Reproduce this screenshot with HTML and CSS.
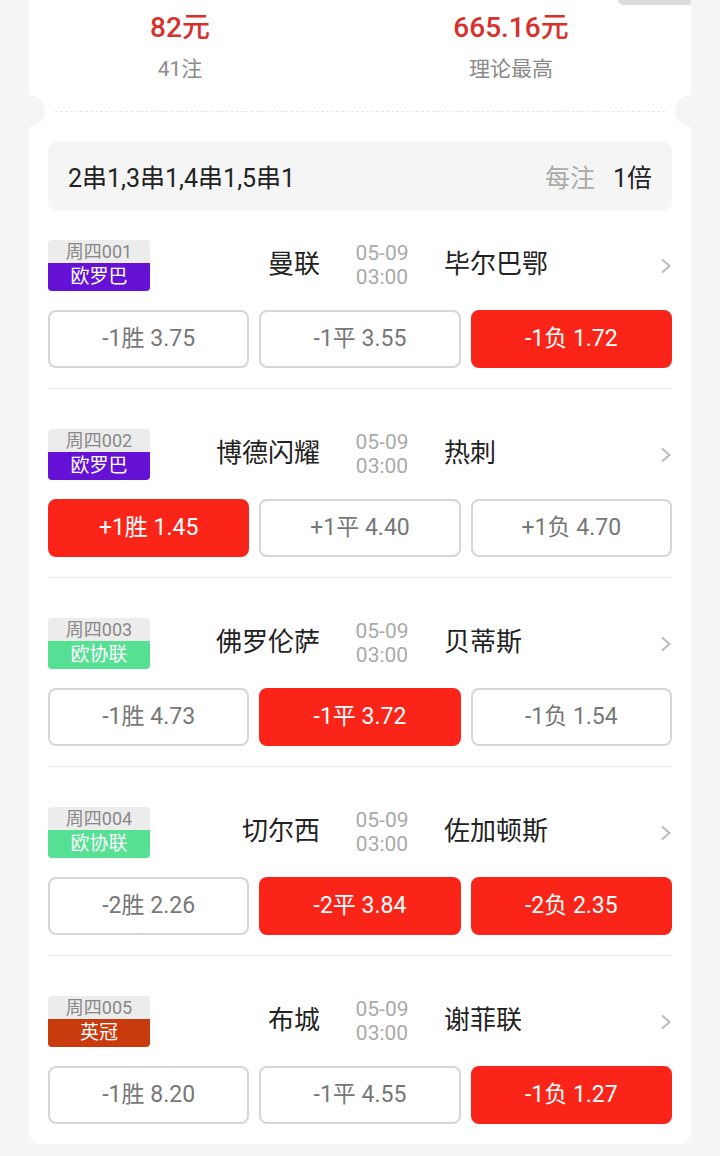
FILE: index.html
```html
<!DOCTYPE html>
<html lang="zh-CN">
<head>
  <meta charset="UTF-8">
  <meta name="viewport" content="width=device-width, initial-scale=1.0">
  <title>投注确认</title>
  <link rel="stylesheet" href="styles.css">
</head>
<body>
  <div class="ticket">
    <span class="corner"></span>

    <div class="summary">
      <div class="stat">
        <div class="stat-value">82元</div>
        <div class="stat-label">41注</div>
      </div>
      <div class="stat">
        <div class="stat-value">665.16元</div>
        <div class="stat-label">理论最高</div>
      </div>
    </div>

    <div class="divider"><div class="divider-line"></div></div>

    <div class="ticket-body">
      <div class="pass-box">
        <span class="pass-type">2串1,3串1,4串1,5串1</span>
        <span class="pass-times"><span class="muted">每注</span>1倍</span>
      </div>

      <!-- 比赛列表 -->
      <div class="match-list">
        <div class="match">
          <div class="match-head">
            <div class="tag">
              <div class="tag-no">周四001</div>
              <div class="tag-league league-uel">欧罗巴</div>
            </div>
            <div class="team home">曼联</div>
            <div class="kickoff">05-09<br>03:00</div>
            <div class="team away">毕尔巴鄂</div>
            <svg class="arrow" viewBox="0 0 12 16"><path d="M2 1.5 L9.5 8 L2 14.5" /></svg>
          </div>
          <div class="odds">
            <div class="odd">-1胜 3.75</div>
            <div class="odd">-1平 3.55</div>
            <div class="odd selected">-1负 1.72</div>
          </div>
        </div>

        <div class="match">
          <div class="match-head">
            <div class="tag">
              <div class="tag-no">周四002</div>
              <div class="tag-league league-uel">欧罗巴</div>
            </div>
            <div class="team home">博德闪耀</div>
            <div class="kickoff">05-09<br>03:00</div>
            <div class="team away">热刺</div>
            <svg class="arrow" viewBox="0 0 12 16"><path d="M2 1.5 L9.5 8 L2 14.5" /></svg>
          </div>
          <div class="odds">
            <div class="odd selected">+1胜 1.45</div>
            <div class="odd">+1平 4.40</div>
            <div class="odd">+1负 4.70</div>
          </div>
        </div>

        <div class="match">
          <div class="match-head">
            <div class="tag">
              <div class="tag-no">周四003</div>
              <div class="tag-league league-uecl">欧协联</div>
            </div>
            <div class="team home">佛罗伦萨</div>
            <div class="kickoff">05-09<br>03:00</div>
            <div class="team away">贝蒂斯</div>
            <svg class="arrow" viewBox="0 0 12 16"><path d="M2 1.5 L9.5 8 L2 14.5" /></svg>
          </div>
          <div class="odds">
            <div class="odd">-1胜 4.73</div>
            <div class="odd selected">-1平 3.72</div>
            <div class="odd">-1负 1.54</div>
          </div>
        </div>

        <div class="match">
          <div class="match-head">
            <div class="tag">
              <div class="tag-no">周四004</div>
              <div class="tag-league league-uecl">欧协联</div>
            </div>
            <div class="team home">切尔西</div>
            <div class="kickoff">05-09<br>03:00</div>
            <div class="team away">佐加顿斯</div>
            <svg class="arrow" viewBox="0 0 12 16"><path d="M2 1.5 L9.5 8 L2 14.5" /></svg>
          </div>
          <div class="odds">
            <div class="odd">-2胜 2.26</div>
            <div class="odd selected">-2平 3.84</div>
            <div class="odd selected">-2负 2.35</div>
          </div>
        </div>

        <div class="match">
          <div class="match-head">
            <div class="tag">
              <div class="tag-no">周四005</div>
              <div class="tag-league league-efl">英冠</div>
            </div>
            <div class="team home">布城</div>
            <div class="kickoff">05-09<br>03:00</div>
            <div class="team away">谢菲联</div>
            <svg class="arrow" viewBox="0 0 12 16"><path d="M2 1.5 L9.5 8 L2 14.5" /></svg>
          </div>
          <div class="odds">
            <div class="odd">-1胜 8.20</div>
            <div class="odd">-1平 4.55</div>
            <div class="odd selected">-1负 1.27</div>
          </div>
        </div>
      </div>
    </div>
  </div>
</body>
</html>
```

FILE: styles.css
```css
body {
  margin: 0;
  background-color: #f5f5f5;
  font-family: Roboto, "Noto Sans CJK SC", sans-serif;
  color: #222;
}

.ticket {
  position: relative;
  margin: 0 29px;
  background-color: #fff;
  border-radius: 0 0 12px 12px;
}

.corner {
  position: absolute;
  top: 0;
  right: 0;
  width: 73px;
  height: 5px;
  background-color: #dcdcdc;
  border-radius: 0 0 4px 8px;
}

/* 金额汇总 */
.summary {
  display: grid;
  grid-template-columns: 302px 1fr;
  padding: 10px 0 11px;
  text-align: center;
}

.stat-value {
  font-size: 28px;
  line-height: 36px;
  font-weight: 500;
  color: #d8302b;
}

.stat-label {
  margin-top: 8px;
  font-size: 21px;
  line-height: 30px;
  color: #8a8a8a;
}

.divider {
  position: relative;
  display: flex;
  align-items: center;
  height: 32px;
  padding: 0 26px;
}

.divider::before,
.divider::after {
  content: "";
  position: absolute;
  top: 0;
  width: 32px;
  height: 32px;
  border-radius: 50%;
  background-color: #f5f5f5;
}

.divider::before {
  left: -16px;
}

.divider::after {
  right: -16px;
}

.divider-line {
  flex: 1;
  border-top: 1px dashed #e6e6e6;
}

.ticket-body {
  padding: 0 19px;
}

.pass-box {
  display: flex;
  align-items: center;
  justify-content: space-between;
  height: 68px;
  margin-top: 15px;
  padding: 0 20px;
  background-color: #f5f5f5;
  border-radius: 8px;
  font-size: 25px;
}

.pass-times .muted {
  color: #aaa;
  margin-right: 18px;
}

/* 比赛 */
.match {
  padding: 40px 0 20px;
  border-bottom: 1px solid #ececec;
}

.match:first-child {
  padding-top: 30px;
}

.match:last-child {
  border-bottom: none;
}

.match-head {
  display: grid;
  grid-template-columns: 102px 170px 124px 1fr 20px;
  align-items: center;
}

.tag {
  border-radius: 4px;
  overflow: hidden;
  text-align: center;
}

.tag-no {
  height: 23px;
  line-height: 23px;
  font-size: 18px;
  background-color: #ececec;
  color: #888;
}

.tag-league {
  height: 28px;
  line-height: 28px;
  font-size: 19px;
  color: #fff;
}

.league-uel {
  background-color: #6611d6;
}

.league-uecl {
  background-color: #55e093;
}

.league-efl {
  background-color: #c93a0c;
}

.team {
  font-size: 26px;
  line-height: 32px;
  margin-top: -3px;
}

.home {
  text-align: right;
}

.away {
  text-align: left;
}

.kickoff {
  text-align: center;
  font-size: 21px;
  line-height: 24px;
  margin-top: -2px;
  color: #aaa;
}

.arrow {
  width: 12px;
  height: 16px;
  justify-self: end;
  fill: none;
  stroke: #bbb;
  stroke-width: 2;
}

.odds {
  display: grid;
  grid-template-columns: repeat(3, 1fr);
  gap: 10px;
  margin-top: 19px;
}

.odd {
  height: 58px;
  line-height: 54px;
  box-sizing: border-box;
  border: 2px solid #d6d6d6;
  border-radius: 8px;
  text-align: center;
  font-size: 23px;
  color: #777;
}

.odd.selected {
  background-color: #fa2419;
  border-color: #fa2419;
  color: #fff;
}
```
